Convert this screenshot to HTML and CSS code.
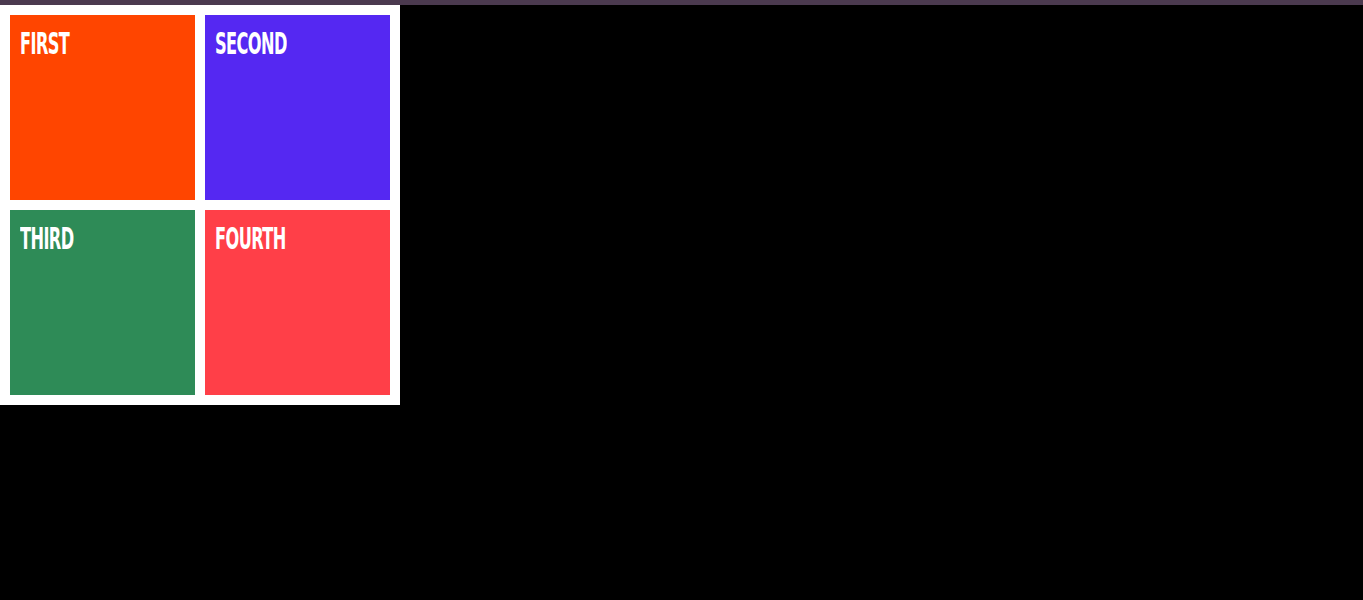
FILE: index.html
```
<!DOCTYPE HTML>
<html>
  <head>
    <meta charset="utf-8">
    <title>Boxes</title>
    <link rel="stylesheet" href="styles.css">
  </head>
  <body>
    <div class="topbar"></div>
    <div class="board">
      <div class="box first"><h2>First</h2></div>
      <div class="box second"><h2>Second</h2></div>
      <div class="box third"><h2>Third</h2></div>
      <div class="box fourth"><h2>Fourth</h2></div>
    </div>
  </body>
</html>
```
FILE: styles.css
```
      body {
        margin: 0;
        background-color: #000;
        font-family: "Liberation Sans Narrow", "DejaVu Sans Condensed", sans-serif;
      }
      .topbar {
        height: 5px;
        background-color: #4b3a4f;
      }
      .board {
        width: 400px;
        box-sizing: border-box;
        padding: 10px;
        background-color: #fff;
        display: grid;
        grid-template-columns: 185px 185px;
        grid-auto-rows: 185px;
        gap: 10px;
      }
      .box {
        padding: 10px;
      }
      .box h2 {
        margin: 0;
        color: #fff;
        font-size: 30px;
        line-height: 38px;
        font-weight: bold;
        text-transform: uppercase;
        letter-spacing: -1px;
        transform: scaleX(0.6);
        transform-origin: left center;
      }
      .first { background-color: #ff4500 }
      .second { background-color: #5528f2 }
      .third { background-color: #2e8b57 }
      .fourth { background-color: #ff3f48 }
```
